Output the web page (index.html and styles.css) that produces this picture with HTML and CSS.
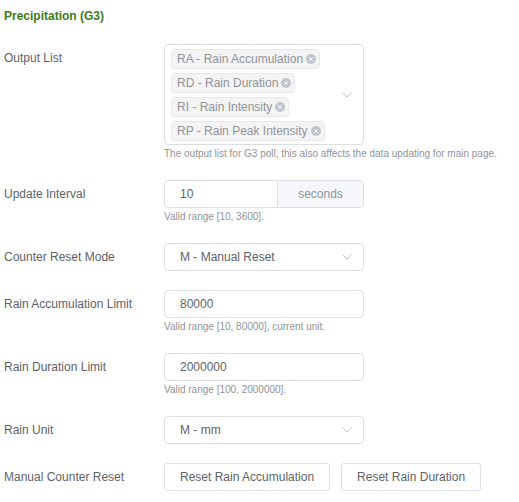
FILE: index.html
```html
<!DOCTYPE html>
<html lang="en">
<head>
<meta charset="utf-8">
<title>Precipitation (G3)</title>
<link rel="stylesheet" href="styles.css">
</head>
<body>
<div class="panel">
  <div class="section-title">Precipitation (G3)</div>

  <div class="form-item">
    <div class="label">Output List</div>
    <div class="control">
      <div class="multi-select">
        <div class="tags">
          <span class="tag">RA - Rain Accumulation<i class="tag-close"><svg viewBox="0 0 10 10"><path d="M3.3 3.3L6.7 6.7M6.7 3.3L3.3 6.7"/></svg></i></span>
          <span class="tag">RD - Rain Duration<i class="tag-close"><svg viewBox="0 0 10 10"><path d="M3.3 3.3L6.7 6.7M6.7 3.3L3.3 6.7"/></svg></i></span>
          <span class="tag">RI - Rain Intensity<i class="tag-close"><svg viewBox="0 0 10 10"><path d="M3.3 3.3L6.7 6.7M6.7 3.3L3.3 6.7"/></svg></i></span>
          <span class="tag">RP - Rain Peak Intensity<i class="tag-close"><svg viewBox="0 0 10 10"><path d="M3.3 3.3L6.7 6.7M6.7 3.3L3.3 6.7"/></svg></i></span>
        </div>
        <svg class="arrow" viewBox="0 0 10 6"><polyline points="0.5,0.5 5,5 9.5,0.5"/></svg>
      </div>
      <div class="help">The output list for G3 poll, this also affects the data updating for main page.</div>
    </div>
  </div>

  <div class="form-item">
    <div class="label">Update Interval</div>
    <div class="control">
      <div class="input-group">
        <div class="input-value">10</div>
        <div class="append">seconds</div>
      </div>
      <div class="help">Valid range [10, 3600].</div>
    </div>
  </div>

  <div class="form-item">
    <div class="label">Counter Reset Mode</div>
    <div class="control">
      <div class="select">
        <span class="input-value">M - Manual Reset</span>
        <svg class="arrow" viewBox="0 0 10 6"><polyline points="0.5,0.5 5,5 9.5,0.5"/></svg>
      </div>
    </div>
  </div>

  <div class="form-item">
    <div class="label">Rain Accumulation Limit</div>
    <div class="control">
      <div class="input"><span class="input-value">80000</span></div>
      <div class="help">Valid range [10, 80000], current unit.</div>
    </div>
  </div>

  <div class="form-item">
    <div class="label">Rain Duration Limit</div>
    <div class="control">
      <div class="input"><span class="input-value">2000000</span></div>
      <div class="help">Valid range [100, 2000000].</div>
    </div>
  </div>

  <div class="form-item">
    <div class="label">Rain Unit</div>
    <div class="control">
      <div class="select">
        <span class="input-value">M - mm</span>
        <svg class="arrow" viewBox="0 0 10 6"><polyline points="0.5,0.5 5,5 9.5,0.5"/></svg>
      </div>
    </div>
  </div>

  <div class="form-item last">
    <div class="label">Manual Counter Reset</div>
    <div class="control buttons">
      <button class="btn" type="button">Reset Rain Accumulation</button>
      <button class="btn" type="button">Reset Rain Duration</button>
    </div>
  </div>
</div>
</body>
</html>
```

FILE: styles.css
```css
* {
  box-sizing: border-box;
}

body {
  margin: 0;
  background: #ffffff;
  font-family: "Liberation Sans", Arial, sans-serif;
  font-size: 12px;
  color: #606266;
}

.panel {
  padding: 8px 0 0 4px;
}

.section-title {
  font-weight: bold;
  color: #3d7b16;
  line-height: 17px;
  margin-bottom: 19px;
}

.form-item {
  display: flex;
  margin-bottom: 19px;
}

.form-item.last {
  margin-bottom: 0;
}

.label {
  width: 160px;
  flex: none;
  line-height: 28px;
}

.control {
  display: flex;
  flex-direction: column;
}

.help {
  font-size: 10px;
  line-height: 15px;
  padding-top: 1px;
  color: #909399;
  white-space: nowrap;
}

/* multiple select with tags */
.multi-select {
  width: 200px;
  border: 1px solid #dcdfe6;
  border-radius: 4px;
  padding: 2px 0 1px;
  display: flex;
  align-items: center;
}

.tags {
  flex: 1;
  display: flex;
  flex-direction: column;
  align-items: flex-start;
}

.tag {
  display: inline-flex;
  align-items: center;
  height: 20px;
  margin: 2px 0 2px 6px;
  padding: 0 3px 0 5px;
  background: #f4f4f5;
  border: 1px solid #e9e9eb;
  border-radius: 4px;
  color: #909399;
  line-height: 18px;
  white-space: nowrap;
}

.tag-close {
  display: inline-block;
  width: 10px;
  height: 10px;
  margin-left: 3px;
  border-radius: 50%;
  background: #c0c4cc;
}

.tag-close svg {
  display: block;
  width: 10px;
  height: 10px;
  stroke: #ffffff;
  stroke-width: 1;
  fill: none;
}

.arrow {
  flex: none;
  width: 10px;
  height: 6px;
  margin-right: 11px;
  fill: none;
  stroke: #c0c4cc;
  stroke-width: 1;
}

/* text inputs and selects */
.input,
.select,
.input-group {
  width: 200px;
  height: 28px;
  border: 1px solid #dcdfe6;
  border-radius: 4px;
  display: flex;
  align-items: center;
  background: #ffffff;
}

.input-value {
  flex: 1;
  padding-left: 15px;
  line-height: 26px;
  color: #606266;
}

.input-group .input-value {
  width: 112px;
  flex: none;
}

.append {
  flex: 1;
  height: 100%;
  background: #f5f7fa;
  border-left: 1px solid #dcdfe6;
  border-radius: 0 3px 3px 0;
  color: #909399;
  text-align: center;
  line-height: 26px;
}

/* buttons */
.buttons {
  flex-direction: row;
  gap: 11px;
}

.btn {
  height: 28px;
  padding: 0 15px;
  border: 1px solid #dcdfe6;
  border-radius: 3px;
  background: #ffffff;
  color: #606266;
  font-family: "Liberation Sans", Arial, sans-serif;
  font-size: 12px;
  line-height: 26px;
  cursor: pointer;
}
```
